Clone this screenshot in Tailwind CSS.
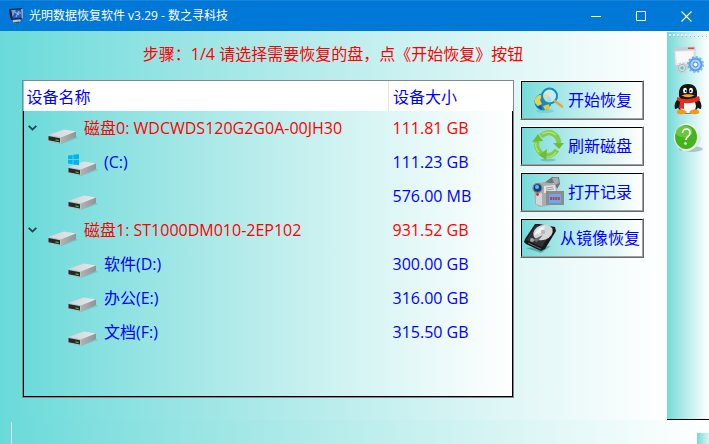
<!DOCTYPE html>
<html lang="zh-CN">
<head>
<meta charset="utf-8">
<meta name="viewport" content="width=device-width, initial-scale=1">
<title>光明数据恢复软件 v3.29 - 数之寻科技</title>
<script src="https://cdn.jsdelivr.net/npm/@tailwindcss/browser@4"></script>
</head>
<body class="flex min-h-screen flex-col bg-white font-['Open_Sans','Noto_Sans_CJK_SC',sans-serif] text-[16px] leading-6 text-[#0000ff]">

<!-- Shared drive drawing and gradients -->
<svg class="h-0 w-0" aria-hidden="true">
  <defs>
    <linearGradient id="dTop" x1="0" y1="0" x2="1" y2="0"><stop offset="0" stop-color="#d2d3d8"/><stop offset="1" stop-color="#e8e8ec"/></linearGradient>
    <linearGradient id="dSide" x1="0" y1="0" x2="1" y2="0"><stop offset="0" stop-color="#b2b2b4"/><stop offset="1" stop-color="#8f9496"/></linearGradient>
    <symbol id="drive" viewBox="0 0 30 28">
      <path d="M1 25 13 28 30 22 27 20Z" fill="#5b9a9c" opacity=".35"/>
      <path d="M0 19 16 13.500 28 15.500 13 21.500Z" fill="url(#dTop)"/>
      <path d="M13 21.500 28 15.500V21L13 27.500Z" fill="url(#dSide)"/>
      <path d="M0 19 13 21.500V27.500L0 25Z" fill="#bfc1c2"/>
      <path d="M.5 20 12 22.300V26.500L.5 24.200Z" fill="#262828"/>
      <path d="M7.500 23.300 10.800 24V25.200L7.500 24.500Z" fill="#27c22d"/>
    </symbol>
  </defs>
</svg>

<header class="flex h-[31px] shrink-0 items-stretch border-t border-[#1a84d9] bg-[#0078d7] text-white">
  <div class="flex min-w-0 flex-1 items-center gap-[5px] pl-2">
    <svg class="size-4 shrink-0" viewBox="0 0 16 16" aria-hidden="true">
      <path d="M1 1 14 0 15 11 4 12 2 9Z" fill="#122b5c"/>
      <path d="M3 2 13 1.500 13.500 9.500 4 10.500Z" fill="#2859b4"/>
      <path d="M3 2 8 2 5 8 4 9Z" fill="#6f9ee0"/>
      <path d="M7 4 11 7M11 3 8 9M9 5 13 5" stroke="#a9ccf5" stroke-width=".9"/>
      <path d="M1 1 3 1 5 12 3 12Z" fill="#1a1d24"/>
      <path d="M5 12 12 11.500 13 13 7 15.500 5 14Z" fill="#b9c0c8"/>
      <path d="M6 15 11 14" stroke="#30353c" stroke-width="1"/>
      <path d="M13 1 15 1V11L13.500 10Z" fill="#8fa0bb"/>
    </svg>
    <h1 class="truncate text-[12px] leading-4">光明数据恢复软件 v3.29 - 数之寻科技</h1>
  </div>
  <button type="button" aria-label="最小化" class="flex w-[46px] items-center justify-center"><svg class="size-[11px]" viewBox="0 0 11 11"><path d="M0 5.500H10" stroke="#fff"/></svg></button>
  <button type="button" aria-label="最大化" class="flex w-[45px] items-center justify-center"><svg class="size-[11px]" viewBox="0 0 11 11"><path d="M.5 .5H9.500V9.500H.5Z" fill="none" stroke="#fff"/></svg></button>
  <button type="button" aria-label="关闭" class="flex w-[45px] items-center justify-center"><svg class="size-[11px]" viewBox="0 0 11 11"><path d="M.5 .5 10.500 10.500M10.500 .5 .5 10.500" stroke="#fff" stroke-width="1.1"/></svg></button>
</header>

<div class="flex flex-1">
  <main class="flex min-w-0 flex-1 flex-col bg-linear-to-r from-[#69dada] to-white pr-[23px] pb-[22px] pl-[22px]">
    <p class="mb-1 flex h-[45px] items-center justify-center text-[#ff0000]">步骤：1/4 请选择需要恢复的盘，点《开始恢复》按钮</p>
    <div class="flex flex-1 gap-[6px]">
      <div class="flex min-w-0 flex-1 flex-col border border-[#828790] bg-linear-to-r from-[#6bdada] to-white">
        <table class="w-full table-fixed border-collapse">
          <colgroup><col><col class="w-[124px]"></colgroup>
          <thead>
            <tr class="h-[30px] bg-white text-left">
              <th scope="col" class="border-r border-[#e5e5e5] py-0 pt-[2px] pl-[3px] font-normal">设备名称</th>
              <th scope="col" class="py-0 pt-[2px] pl-1 font-normal">设备大小</th>
            </tr>
          </thead>
          <tbody class="border-x border-black">
            <tr class="h-[34px] text-[#ff0000]">
              <td class="p-0"><div class="flex h-[34px] items-center pl-1">
                <button type="button" aria-label="折叠磁盘0" class="mr-[11px]"><svg class="h-[6px] w-[9px]" viewBox="0 0 9 6"><path d="M.7 .8 4.500 4.600 8.300 .8" fill="none" stroke="#1d4548" stroke-width="1.8"/></svg></button>
                <svg class="mt-1 mr-[6px] h-7 w-[30px]"><use href="#drive"/></svg>
                <span>磁盘0: WDCWDS120G2G0A-00JH30</span></div></td>
              <td class="p-0 pl-1">111.81 GB</td>
            </tr>
            <tr class="h-[34px]">
              <td class="p-0"><div class="flex h-[34px] items-center pl-11">
                <svg class="mr-[6px] h-7 w-[30px]" viewBox="0 0 30 28"><use href="#drive" width="30" height="28"/><path d="M0 7.600 4.700 6.900V11.300H0ZM5.300 6.800 11 6V11.300H5.300ZM0 11.900H4.700V16.300L0 15.600ZM5.300 11.900H11V17.200L5.300 16.400Z" fill="#00b5f1"/></svg>
                <span>(C:)</span></div></td>
              <td class="p-0 pl-1">111.23 GB</td>
            </tr>
            <tr class="h-[34px]">
              <td class="p-0"><div class="flex h-[34px] items-center pl-11"><svg class="h-7 w-[30px]"><use href="#drive"/></svg></div></td>
              <td class="p-0 pl-1">576.00 MB</td>
            </tr>
            <tr class="h-[34px] text-[#ff0000]">
              <td class="p-0"><div class="flex h-[34px] items-center pl-1">
                <button type="button" aria-label="折叠磁盘1" class="mr-[11px]"><svg class="h-[6px] w-[9px]" viewBox="0 0 9 6"><path d="M.7 .8 4.500 4.600 8.300 .8" fill="none" stroke="#1d4548" stroke-width="1.8"/></svg></button>
                <svg class="mt-1 mr-[6px] h-7 w-[30px]"><use href="#drive"/></svg>
                <span>磁盘1: ST1000DM010-2EP102</span></div></td>
              <td class="p-0 pl-1">931.52 GB</td>
            </tr>
            <tr class="h-[34px]">
              <td class="p-0"><div class="flex h-[34px] items-center pl-11"><svg class="mr-[6px] h-7 w-[30px]"><use href="#drive"/></svg><span>软件(D:)</span></div></td>
              <td class="p-0 pl-1">300.00 GB</td>
            </tr>
            <tr class="h-[34px]">
              <td class="p-0"><div class="flex h-[34px] items-center pl-11"><svg class="mr-[6px] h-7 w-[30px]"><use href="#drive"/></svg><span>办公(E:)</span></div></td>
              <td class="p-0 pl-1">316.00 GB</td>
            </tr>
            <tr class="h-[34px]">
              <td class="p-0"><div class="flex h-[34px] items-center pl-11"><svg class="mr-[6px] h-7 w-[30px]"><use href="#drive"/></svg><span>文档(F:)</span></div></td>
              <td class="p-0 pl-1">315.50 GB</td>
            </tr>
          </tbody>
        </table>
        <div class="flex-1 border-x border-b border-black"></div>
      </div>

      <div class="flex w-[124px] shrink-0 flex-col gap-[6px]">
        <button type="button" class="h-10 border border-t-white border-r-[#696969] border-b-[#696969] border-l-white">
          <span class="flex h-full items-center justify-center gap-1 border border-t-black border-r-[#a0a0a0] border-b-[#a0a0a0] border-l-black bg-linear-to-r from-[#74dbdb] to-white">
            <svg class="size-8" viewBox="0 0 32 32" aria-hidden="true">
              <ellipse cx="13" cy="27" rx="9" ry="2" fill="#4aa" opacity=".3"/>
              <circle cx="11" cy="18" r="8.500" fill="#1489c8"/>
              <path d="M3 15Q6 10 11 11L8 16 10 20 6 22 3 19Z" fill="#e8d24c"/>
              <path d="M11 22 17 20 18 24 13 26Z" fill="#f0c62e"/>
              <path d="M5 23 9 21 10 26Z" fill="#135b96"/>
              <circle cx="17.500" cy="12" r="7.500" fill="#c9effa" fill-opacity=".82" stroke="#178bc0" stroke-width="2"/>
              <path d="M12 13Q13 7 19 7Q15 10 15 17Z" fill="#f4df8b" opacity=".8"/>
              <path d="M23 17 30 22.500" stroke="#e4a642" stroke-width="2.500" stroke-linecap="round"/>
            </svg>
            <span>开始恢复</span>
          </span>
        </button>
        <button type="button" class="h-10 border border-t-white border-r-[#696969] border-b-[#696969] border-l-white">
          <span class="flex h-full items-center justify-center gap-1 border border-t-black border-r-[#a0a0a0] border-b-[#a0a0a0] border-l-black bg-linear-to-r from-[#74dbdb] to-white">
            <svg class="size-8" viewBox="0 0 32 32" aria-hidden="true">
              <ellipse cx="16" cy="30" rx="8" ry="1.500" fill="#398888" opacity=".35"/>
              <g fill="none" stroke="#82cf45" stroke-width="5"><path d="M9 6Q18 -1 25 7 27 10 27 14"/><path d="M5 11Q3 19 10 24"/><path d="M11 24.500Q19 28 25 20"/></g>
              <g fill="#70bd35"><path d="M21 13 32 13 27 19Z"/><path d="M0 12 6 4 11 11Z"/><path d="M15 19 14 30 7 25Z"/></g>
              <path d="M10 4Q18 0 24 5M4 13Q3 19 7 22M15 27Q21 27 24 22" fill="none" stroke="#b5e67b" stroke-width="1.200"/>
            </svg>
            <span>刷新磁盘</span>
          </span>
        </button>
        <button type="button" class="h-10 border border-t-white border-r-[#696969] border-b-[#696969] border-l-white">
          <span class="flex h-full items-center justify-center gap-1 border border-t-black border-r-[#a0a0a0] border-b-[#a0a0a0] border-l-black bg-linear-to-r from-[#74dbdb] to-white">
            <svg class="size-8" viewBox="0 0 32 32" aria-hidden="true">
              <path d="M12 7 20 1 27 1 28 8 25 13 22 7 13 9Z" fill="#727476"/>
              <path d="M20 2 26 1.500 27 7 23 9Z" fill="#a9abac"/>
              <path d="M2 8 12 6 23 8 25 14V28L8 31 3 28Z" fill="#a9adaf"/>
              <path d="M4 18 10 17V30L4 28Z" fill="#d3d5d6"/>
              <path d="M12 10 23 9 24 15 12 17Z" fill="#e2e3e3"/>
              <path d="M14 12 21 11M14 14 22 13" stroke="#999" stroke-width="1"/>
              <circle cx="5.500" cy="12" r="5" fill="#777b80"/><circle cx="5.500" cy="12" r="3.700" fill="#143d7e"/><circle cx="5" cy="11" r="2" fill="#5db6f5"/>
              <circle cx="5.500" cy="18.500" r="1.400" fill="#e52620"/>
              <path d="M14 15H32V29H14Z" fill="#8a8c8f"/><path d="M17 18H29V27H17Z" fill="#62adf0"/>
              <path d="M18 22.500H28" stroke="#d8364d" stroke-width="3" stroke-dasharray="2 .6"/>
            </svg>
            <span>打开记录</span>
          </span>
        </button>
        <button type="button" class="h-10 border border-t-white border-r-[#696969] border-b-[#696969] border-l-white">
          <span class="flex h-full items-center justify-center gap-1 border border-t-black border-r-[#a0a0a0] border-b-[#a0a0a0] border-l-black bg-linear-to-r from-[#74dbdb] to-white">
            <svg class="size-8" viewBox="0 0 32 32" aria-hidden="true">
              <path d="M2 26 17 31 27 24Z" fill="#215858" opacity=".4"/>
              <path d="M1 17 11 2 15 2 31 5 32 9 21 27 17 29 2 22 0 20Z" fill="#16181b"/>
              <path d="M2 18 12 3 30 6 18 25Z" fill="#303235"/>
              <ellipse cx="19" cy="10.500" rx="10" ry="7.500" transform="rotate(-20 19 10.500)" fill="#d4d6d7"/>
              <path d="M10 13Q13 5 21 4L19 10Z" fill="#f2f2f2"/>
              <circle cx="19" cy="10" r="2.200" fill="#b4b7b9"/>
              <path d="M8 18 19 13 13 20Z" fill="#696c6e"/><circle cx="8" cy="18" r="2" fill="#a1a3a5"/>
              <path d="M4 21 17 27" stroke="#656768" stroke-width="1"/>
            </svg>
            <span class="whitespace-nowrap">从镜像恢复</span>
          </span>
        </button>
      </div>
    </div>
  </main>

  <aside class="mt-px flex w-[42px] shrink-0 flex-col items-center border-b border-black bg-linear-to-r from-[#72dada] to-white">
    <svg class="mt-[2px] h-1 w-full" aria-hidden="true"><defs><pattern id="grip" width="4" height="4" patternUnits="userSpaceOnUse"><path d="M2 0H4V2H2Z" fill="#e9f1f1"/><path d="M3 2H4V3H3Z" fill="#9bb5b5"/></pattern></defs><rect width="100%" height="4" fill="url(#grip)"/></svg>
    <nav class="flex flex-col gap-[7px] pt-[6px]">
      <button type="button" aria-label="设置" class="size-8">
        <svg class="size-8" viewBox="0 0 32 32">
          <path d="M2 4 23 3V19L3 22Z" fill="#e7e8eb" stroke="#bfc7cb" stroke-width=".7"/>
          <path d="M2 4 23 3V6L2 7Z" fill="#c9cdd1"/><path d="M16 3.500H22V5H16Z" fill="#e24c43"/>
          <path d="M4 8 21 7V17L5 19Z" fill="#f8f8f8"/>
          <circle cx="23.500" cy="20.500" r="6" fill="#a8d2fa" stroke="#5a9de8" stroke-width="2"/>
          <circle cx="23.500" cy="20.500" r="7.500" fill="none" stroke="#78b4f3" stroke-width="2" stroke-dasharray="2.200 1.730"/>
          <circle cx="23.500" cy="20.500" r="2.500" fill="#eaf5ff" stroke="#4387d6"/>
          <circle cx="10" cy="24" r="3.600" fill="#dce1e4" stroke="#a9b3b8"/>
          <circle cx="10" cy="24" r="4.700" fill="none" stroke="#c6cdd1" stroke-width="1.600" stroke-dasharray="2 1.690"/>
          <circle cx="10" cy="24" r="1.800" fill="#65bdc9"/>
        </svg>
      </button>
      <button type="button" aria-label="QQ" class="size-8">
        <svg class="size-8" viewBox="0 0 32 32">
          <path d="M7 15Q1 20 3 26 6 26 8 22M25 15Q31 20 29 26 26 26 24 22" fill="#161616"/>
          <ellipse cx="16" cy="22" rx="10.500" ry="9" fill="#161616"/>
          <ellipse cx="16" cy="23" rx="8" ry="7.500" fill="#f8f8f8"/>
          <path d="M7 13Q6 1 16 1T25 13Q25 17 16 17T7 13Z" fill="#151515"/>
          <ellipse cx="13" cy="7.500" rx="2" ry="2.700" fill="#fff"/><ellipse cx="19" cy="7.500" rx="2" ry="2.700" fill="#fff"/>
          <circle cx="13.700" cy="8" r="1" fill="#111"/><circle cx="18.500" cy="8" r="1" fill="#111"/>
          <path d="M9.500 12.500Q16 10 22.500 12.500 16 16 9.500 12.500Z" fill="#f8a817"/>
          <path d="M5 14Q16 19 27 13L28 17Q21 21 12 20V26L7 25 8 19 5 17Z" fill="#e62b20"/>
          <path d="M6 27Q11 25 15 29 13 32 7 31 3 30 6 27ZM26 27Q21 25 17 29 19 32 25 31 29 30 26 27Z" fill="#f39a14"/>
        </svg>
      </button>
      <button type="button" aria-label="帮助" class="size-8">
        <svg class="size-8" viewBox="0 0 32 32">
          <ellipse cx="19" cy="27" rx="12" ry="3" fill="#6b8080" opacity=".4"/>
          <path d="M5 24 12 30Q25 29 29 17L27 9Z" fill="#dfe4e3"/>
          <ellipse cx="14.500" cy="15" rx="12.500" ry="13.500" fill="#eef2ee"/>
          <ellipse cx="14" cy="15" rx="11" ry="12" fill="#43b41b"/>
          <ellipse cx="12" cy="9.500" rx="8.500" ry="6" fill="#84d556" opacity=".6"/>
          <path d="M10.500 11Q11 7 14.500 7T18 11Q18 13 15.500 15 14 16 14 18" fill="none" stroke="#fff" stroke-width="1.700"/><circle cx="13.500" cy="21.500" r="1.300" fill="#fff"/>
        </svg>
      </button>
    </nav>
  </aside>
</div>

<footer class="flex h-6 shrink-0 items-end justify-between bg-linear-to-r from-[#69dada] to-white pl-[11px]">
  <div class="h-[22px] w-px bg-[#d7e3e3]"></div>
  <div class="h-[11px] w-3 bg-linear-to-r from-[#72dada] to-[#d8f5f5]"></div>
</footer>
</body>
</html>
